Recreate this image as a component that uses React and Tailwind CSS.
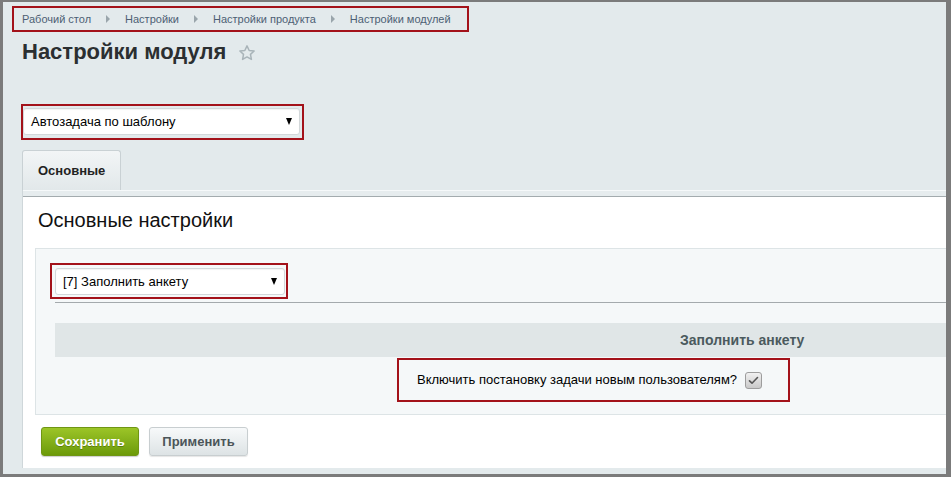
import React from "react";

const F = { fontFamily: '"Liberation Sans", Arial, sans-serif' };

function Arrow() {
  return (
    <span className="inline-block w-0 h-0 border-y-[4px] border-y-transparent border-l-[4px] border-l-[#9aa5ab] mx-[15px]" />
  );
}

function Select({ text, width }) {
  return (
    <div
      className="flex items-center justify-between h-[27px] bg-white rounded-[3px] border border-[#d3d8da] shadow-[inset_0_1px_1px_rgba(0,0,0,0.05)] pl-[7px] pr-[7px]"
      style={{ width }}
    >
      <span className="text-[13px] text-black leading-none">{text}</span>
      <span className="w-0 h-0 border-x-[3.5px] border-x-transparent border-t-[7px] border-t-black" />
    </div>
  );
}

export default function App() {
  return (
    <div
      className="w-[951px] h-[477px] bg-[#7b7b7b] pt-[2px] pl-[3px] pr-[5px] pb-[3px]"
      style={F}
    >
      <div className="w-full h-full bg-[#e3eaec] flex flex-col overflow-hidden">
        {/* breadcrumb */}
        <div className="ml-[9px] mt-[4px] w-[457px] h-[26px] border-2 border-[#a3121a] flex items-center pl-[8px] text-[11px] text-[#4d5f74]">
          <span>Рабочий стол</span>
          <Arrow />
          <span>Настройки</span>
          <Arrow />
          <span>Настройки продукта</span>
          <Arrow />
          <span>Настройки модулей</span>
        </div>

        {/* title */}
        <div className="mt-[7px] ml-[19px] flex items-center h-[26px]">
          <h1 className="text-[22px] leading-[26px] font-bold text-[#2b2f31]">Настройки модуля</h1>
          <svg className="ml-[12px] mt-[2px]" width="18" height="18" viewBox="0 0 24 24" fill="none" stroke="#a9b4b9" strokeWidth="2" strokeLinejoin="round">
            <polygon points="12,2.5 14.9,8.6 21.5,9.4 16.6,13.9 17.9,20.5 12,17.2 6.1,20.5 7.4,13.9 2.5,9.4 9.1,8.6" />
          </svg>
        </div>

        {/* select 1 */}
        <div className="mt-[39px] ml-[18px] w-[283px] h-[36px] border-2 border-[#a3121a] pt-[2px]">
          <Select text="Автозадача по шаблону" width="277px" />
        </div>

        {/* tab */}
        <div className="mt-[10px] ml-[19px] flex">
          <div className="w-[99px] h-[40px] border border-b-0 border-[#c9d1d4] rounded-t-[3px] bg-gradient-to-b from-[#f2f5f6] to-[#e2e8ea] flex items-center pl-[15px] text-[13px] font-bold text-[#222]">
            Основные
          </div>
        </div>

        {/* panel */}
        <div className="ml-[19px] flex-1 mb-[6px] border-l border-[#cfd7da] flex flex-col bg-white min-w-0">
          <div className="h-[7px] bg-[#e6ecee] border-t border-[#f6f9fa] border-b border-b-[#a3abae] shrink-0" />
          <div className="pt-[11px] pl-[15px] text-[20px] leading-[24px] text-[#111]">Основные настройки</div>

          <div className="mt-[16px] ml-[12px] h-[167px] border border-r-0 border-[#dde4e6] bg-[#f5f8f9] flex flex-col">
            <div className="mt-[14px] ml-[14px] w-[238px] h-[36px] border-2 border-[#a3121a] pt-[3px] pl-[3px]">
              <Select text="[7] Заполнить анкету" width="230px" />
            </div>
            <div className="mt-[3px] ml-[19px] h-[1px] bg-[#a4aaad]" />
            <div className="mt-[20px] ml-[19px] h-[34px] bg-[#e0e6e7] flex items-center pl-[625px] text-[14px] font-bold text-[#4b5a5e]">
              Заполнить анкету
            </div>
            <div className="mt-[1px] ml-[361px] w-[393px] h-[44px] border-2 border-[#a3121a] flex items-center pl-[18px] text-[13px] text-black">
              <span>Включить постановку задачи новым пользователям?</span>
              <span className="ml-[8px] w-[17px] h-[17px] rounded-[3px] border border-[#9d9d9d] bg-gradient-to-b from-[#f1f1f1] to-[#c9c9c9] flex items-center justify-center">
                <svg width="11" height="9" viewBox="0 0 11 9" fill="none" stroke="#555" strokeWidth="1.6" strokeLinecap="round" strokeLinejoin="round">
                  <polyline points="1.5,4.8 4,7.2 9.5,1.5" />
                </svg>
              </span>
            </div>
          </div>

          <div className="mt-[12px] ml-[18px] flex gap-[10px]">
            <button className="w-[98px] h-[29px] rounded-[3px] bg-gradient-to-b from-[#9cc527] to-[#6c9a08] border border-[#6f9613] text-white text-[13px] font-bold shadow-[0_1px_1px_rgba(0,0,0,0.2)] [text-shadow:0_1px_0_rgba(0,0,0,0.25)]">
              Сохранить
            </button>
            <button className="w-[99px] h-[29px] rounded-[3px] bg-gradient-to-b from-[#f7f9fa] to-[#dde3e5] border border-[#c8ced0] text-[#4b5559] text-[13px] font-bold shadow-[0_1px_1px_rgba(0,0,0,0.1)]">
              Применить
            </button>
          </div>
        </div>
      </div>
    </div>
  );
}
